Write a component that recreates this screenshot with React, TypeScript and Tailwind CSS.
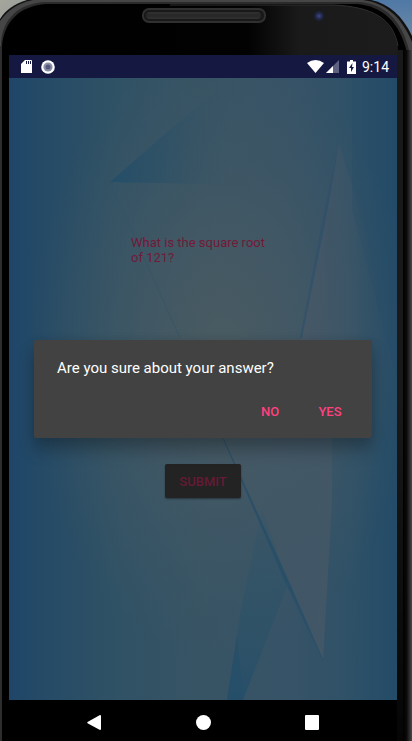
function PhoneBody() {
  return (
    <svg
      aria-hidden="true"
      className="absolute inset-0 h-full w-full"
      viewBox="0 0 412 741"
      preserveAspectRatio="none"
    >
      <defs>
        <linearGradient id="deskLeft" x1="0" y1="0" x2="1" y2="1">
          <stop offset="0" stopColor="#a5a59a" />
          <stop offset="1" stopColor="#7d94a8" />
        </linearGradient>
        <linearGradient id="deskRight" x1="0" y1="0" x2="0" y2="1">
          <stop offset="0" stopColor="#4f78a5" />
          <stop offset="1" stopColor="#8195a8" />
        </linearGradient>
        <linearGradient id="face" x1="0" y1="0" x2="1" y2="0">
          <stop offset="0" stopColor="#000000" />
          <stop offset="0.62" stopColor="#020202" />
          <stop offset="0.75" stopColor="#1a1a1a" />
          <stop offset="1" stopColor="#1c1c1c" />
        </linearGradient>
        <linearGradient id="fade" x1="0" y1="0" x2="0" y2="1">
          <stop offset="0.5" stopColor="#000000" stopOpacity="0" />
          <stop offset="1" stopColor="#000000" stopOpacity="0.8" />
        </linearGradient>
        <linearGradient id="rim" x1="0" y1="0" x2="1" y2="0">
          <stop offset="0" stopColor="#000000" />
          <stop offset="0.4" stopColor="#0a0a0a" />
          <stop offset="1" stopColor="#484848" />
        </linearGradient>
        <radialGradient id="lens">
          <stop offset="0" stopColor="#3d4a85" />
          <stop offset="0.5" stopColor="#22284a" />
          <stop offset="1" stopColor="#181818" />
        </radialGradient>
      </defs>
      <rect width="60" height="70" fill="url(#deskLeft)" />
      <rect x="340" width="72" height="60" fill="url(#deskRight)" />
      <path d="M0 741V19C6 9 17 2 31-1H366C387 2 402 14 413 38V741Z" fill="#111111" />
      <path d="M0 741V21C8 10 18 3 33 0H363C385 3 401 16 412 42V741Z" fill="#464646" />
      <path d="M1 741V42C3 18 19 4 44 2H360C384 4 401 19 409 50V741Z" fill="#2b2b2b" />
      <path d="M2 741V46C4 21 20 6 46 4H357C382 6 400 22 407 53V741Z" fill="#000000" />
      <path d="M3 741V49C5 23 20 9 46 7L140 5H334C372 7 393 18 398 48V741Z" fill="url(#face)" />
      <path d="M170 5H334C372 7 393 18 398 46" fill="none" stroke="#303030" />
      <path d="M397 50H403V741H397Z" fill="#191919" />
      <path d="M397 50H403V741H397Z" fill="url(#fade)" />
      <path d="M403 50H412V741H403Z" fill="url(#rim)" />
      <path d="M1 46V741" stroke="#2d2d2d" strokeWidth="2" />
      <rect x="142" y="8" width="124" height="15" rx="7" fill="#303030" />
      <rect x="144" y="10" width="120" height="11" rx="5" fill="#191919" />
      <rect x="146" y="12" width="115" height="7" rx="3" fill="#282828" />
      <path d="M148 13H259M148 18H259" stroke="#353535" />
      <circle cx="319" cy="16" r="6" fill="url(#lens)" />
    </svg>
  );
}

function Wallpaper() {
  return (
    <svg
      aria-hidden="true"
      className="absolute inset-0 h-full w-full"
      viewBox="0 0 388 622"
      preserveAspectRatio="none"
    >
      <defs>
        <linearGradient id="base" x1="0" y1="0" x2="1" y2="0">
          <stop offset="0" stopColor="#1f4669" />
          <stop offset="0.1" stopColor="#264b66" />
          <stop offset="0.28" stopColor="#305265" />
          <stop offset="0.5" stopColor="#375464" />
          <stop offset="0.72" stopColor="#375367" />
          <stop offset="0.88" stopColor="#2f5167" />
          <stop offset="1" stopColor="#234b68" />
        </linearGradient>
        <radialGradient id="glow" cx="0.55" cy="0.44" r="0.5">
          <stop offset="0" stopColor="#4a5b61" />
          <stop offset="0.45" stopColor="#455964" stopOpacity="0.7" />
          <stop offset="1" stopColor="#3e5664" stopOpacity="0" />
        </radialGradient>
        <linearGradient id="wedge" x1="101" y1="0" x2="220" y2="0" gradientUnits="userSpaceOnUse">
          <stop offset="0" stopColor="#244e69" />
          <stop offset="0.45" stopColor="#2b5066" stopOpacity="0.6" />
          <stop offset="1" stopColor="#325266" stopOpacity="0" />
        </linearGradient>
        <linearGradient id="beam" x1="0" y1="430" x2="0" y2="622" gradientUnits="userSpaceOnUse">
          <stop offset="0" stopColor="#2f5468" stopOpacity="0.2" />
          <stop offset="0.6" stopColor="#2e5267" stopOpacity="0.8" />
          <stop offset="1" stopColor="#274f69" />
        </linearGradient>
        <linearGradient id="shard" x1="240" y1="0" x2="330" y2="0" gradientUnits="userSpaceOnUse">
          <stop offset="0" stopColor="#475966" stopOpacity="0.3" />
          <stop offset="1" stopColor="#435766" />
        </linearGradient>
        <linearGradient id="pane" x1="291" y1="0" x2="388" y2="0" gradientUnits="userSpaceOnUse">
          <stop offset="0" stopColor="#4a5867" stopOpacity="0.7" />
          <stop offset="0.5" stopColor="#405667" stopOpacity="0.5" />
          <stop offset="0.75" stopColor="#365367" stopOpacity="0.1" />
          <stop offset="1" stopColor="#2d5067" stopOpacity="0" />
        </linearGradient>
      </defs>
      <rect width="388" height="622" fill="url(#base)" />
      <rect width="388" height="622" fill="url(#glow)" />
      <path d="M101 104L164 49L221 0H300L240 107Z" fill="url(#wedge)" />
      <path d="M330 65L388 260V340H291V260Z" fill="url(#pane)" />
      <path d="M101 104L171 260" stroke="#315468" strokeOpacity="0.5" />
      <path d="M330 65L316 130L291 260L293 260L319 130Z" fill="#2d5069" fillOpacity="0.7" />
      <path d="M214 360L323 330L323 422L314 582L279 502Z" fill="url(#shard)" />
      <path d="M253 430L279 506L234 622H218L232 530Z" fill="url(#beam)" />
      <path d="M214 360L279 502L314 582L277 505Z" fill="#294f69" stroke="#294f69" strokeOpacity="0.5" />
      <path d="M218 622L228 560L234 622Z" fill="#244e6a" fillOpacity="0.5" />
      <path d="M343 0L388 0V300L343 130Z" fill="#234c69" fillOpacity="0.2" />
      <path d="M357 422L388 290V622H345Z" fill="#264e67" fillOpacity="0.2" />
    </svg>
  );
}

function StatusBar() {
  return (
    <header className="flex h-[23px] items-center justify-between bg-[#151941] pl-3 pr-2 text-white">
      <div className="flex items-center gap-[9px]">
        <svg aria-label="SD card" role="img" className="h-[13px] w-[11px]" viewBox="0 0 11 13">
          <path d="M4 0H10Q11 0 11 1V13H0V4Z" fill="#fff" />
          <path d="M5.500 1V4M7.500 1V4M9.500 1V4" stroke="#151941" />
        </svg>
        <svg aria-label="Recording" role="img" className="size-[14px]" viewBox="0 0 14 14">
          <circle cx="7" cy="7" r="6.8" fill="#fff" />
          <circle cx="7" cy="7" r="4.6" fill="#8c8fa8" />
          <circle cx="7" cy="7" r="2.5" fill="#555a7d" />
        </svg>
      </div>
      <div className="flex items-center">
        <svg aria-label="Wi-Fi" role="img" className="h-[13px] w-[17px]" viewBox="0 0 17 13">
          <path d="M0 3Q8.500-3 17 3L8.500 13Z" fill="#fff" />
        </svg>
        <svg aria-label="Mobile signal" role="img" className="ml-[2px] h-[13px] w-[13px]" viewBox="0 0 13 13">
          <path d="M13 0V13H0Z" fill="#5f6280" />
          <path d="M7 6V13H0Z" fill="#fff" />
        </svg>
        <svg aria-label="Battery charging" role="img" className="ml-2 h-[14px] w-[9px]" viewBox="0 0 9 14">
          <path d="M3 0H6V1.500H9V14H0V1.500H3Z" fill="#fff" />
          <path d="M5.500 3L2 8H4V12L7 7H5Z" fill="#151941" />
        </svg>
        <time className="ml-[6px] text-[14px] leading-5">9:14</time>
      </div>
    </header>
  );
}

function NavigationBar() {
  return (
    <nav aria-label="System" className="flex h-[41px] items-center justify-center gap-[85px] bg-black pt-1">
      <button type="button" aria-label="Back" className="flex size-6 items-center justify-center">
        <svg className="h-[15px] w-[14px]" viewBox="0 0 14 15">
          <path d="M13 0Q14 0 14 1V14Q14 15 13 15L0.500 8.300Q0 7.500 0.500 7Z" fill="#fff" />
        </svg>
      </button>
      <button type="button" aria-label="Home" className="flex size-6 items-center justify-center">
        <span className="size-[15px] rounded-full bg-white" />
      </button>
      <button type="button" aria-label="Recent apps" className="flex size-6 items-center justify-center">
        <span className="h-[15px] w-[14px] rounded-[1px] bg-white" />
      </button>
    </nav>
  );
}

function ConfirmDialog() {
  return (
    <div className="absolute inset-0 flex items-center px-[25px]">
      <div
        role="alertdialog"
        aria-modal="true"
        aria-labelledby="confirm-message"
        className="w-full rounded-[2px] bg-[#424242] pt-[18px] pb-[9px] shadow-[0_12px_16px_rgba(0,0,0,0.25),0_0_8px_rgba(0,0,0,0.1)]"
      >
        <p id="confirm-message" className="px-[23px] text-[15px] leading-5 text-white">
          Are you sure about your answer?
        </p>
        <div className="mt-[17px] flex justify-end pr-3 text-[13px] font-medium text-[#ff4081]">
          <button type="button" className="h-[34px] w-[60px]">NO</button>
          <button type="button" className="h-[34px] w-[60px]">YES</button>
        </div>
      </div>
    </div>
  );
}

export default function App() {
  return (
    <div className="relative flex min-h-screen flex-col overflow-hidden bg-black pt-[55px] pr-[15px] pl-[9px] font-[Roboto,sans-serif]">
      <PhoneBody />
      <div className="relative flex flex-1 flex-col">
        <StatusBar />
        <main className="relative flex flex-1 flex-col">
          <Wallpaper />
          <div className="relative flex flex-1 flex-col items-center pt-[157px]">
            <p className="w-36 text-[13px] leading-[15px] text-[#721a38]">What is the square root of 121?</p>
            <button
              type="button"
              className="mt-[199px] h-[34px] w-[76px] rounded-[2px] bg-[#232323] pt-px text-[13px] font-medium text-[#661a35] shadow-[0_1px_2px_rgba(0,0,0,0.4)]"
            >
              SUBMIT
            </button>
          </div>
          <ConfirmDialog />
        </main>
        <NavigationBar />
      </div>
    </div>
  );
}
